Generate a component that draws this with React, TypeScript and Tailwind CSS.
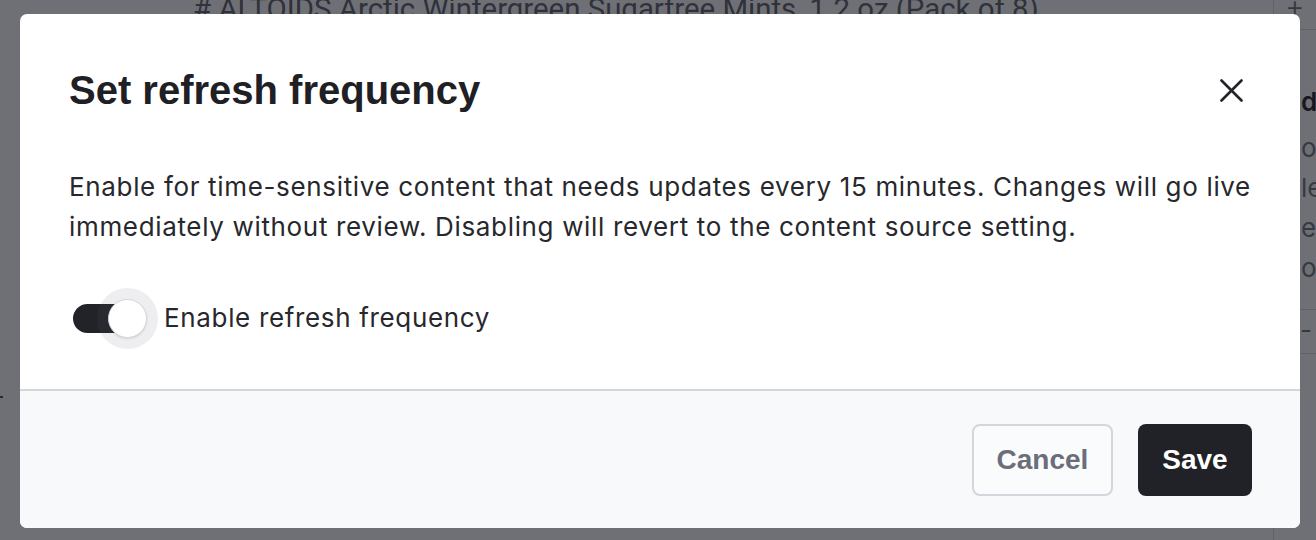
import { useState } from "react";

const sans = "font-['Liberation_Sans',Arial,sans-serif]";
const inter = "font-['Inter','Noto_Sans',sans-serif]";

function Toggle({ on, onChange }: { on: boolean; onChange: () => void }) {
  return (
    <button
      type="button"
      role="switch"
      aria-checked={on}
      onClick={onChange}
      className="relative ml-[4px] h-[29px] w-[70px] shrink-0 rounded-full bg-[#222328]"
    >
      {/* focus halo + thumb */}
      <span className="absolute left-[24px] top-[-16px] h-[61px] w-[61px] rounded-full bg-[rgba(99,102,125,0.11)]" />
      <span className="absolute left-[35px] top-[-5px] h-[39px] w-[39px] rounded-full border border-[#d6d7de] bg-white shadow-[0_1px_2px_rgba(0,0,0,0.12)]" />
    </button>
  );
}

function Backdrop() {
  return (
    <div className="flex h-[540px] w-full bg-white">
      {/* main column */}
      <div className="flex flex-1 flex-col">
        <p className="-mt-[8px] whitespace-nowrap pl-[193px] font-['Roboto','Liberation_Sans',sans-serif] text-[29.4px] leading-[34px] text-[#5b5f6a]">
          # ALTOIDS Arctic Wintergreen Sugarfree Mints, 1.2 oz (Pack of 8)
        </p>
        <div className="mt-[370px] h-[2px] w-[3px] bg-[#3b4a86]" />
      </div>

      {/* right panel */}
      <div className={`${inter} flex w-[43px] shrink-0 flex-col border-l border-[#d9dbe0]`}>
        <div className="flex h-[30px] items-start border-b border-[#d9dbe0] pl-[11px]">
          <span className="-mt-[9px] text-[30px] font-light leading-[30px] text-[#6b6f7a]">+</span>
        </div>
        <div className="whitespace-nowrap pl-[27px] pt-[56px]">
          <p className="text-[26px] font-semibold leading-[32px] text-[#1f2025]">do</p>
          <div className="mt-[10px] text-[26px] leading-[40px] text-[#70737c]">
            <p>o</p>
            <p>le</p>
            <p>e</p>
            <p>op</p>
          </div>
        </div>
        <div className="mt-[21px] h-[45px] border-y border-[#d9dbe0] pl-[26px] text-[26px] leading-[40px] text-[#70737c]">
          -
        </div>
      </div>
    </div>
  );
}

export default function App() {
  const [enabled, setEnabled] = useState(true);

  return (
    <div className="relative h-[540px] w-[1316px] overflow-hidden">
      <Backdrop />

      {/* Modal overlay */}
      <div className="absolute inset-0 flex items-start bg-[rgba(20,21,30,0.61)] pl-[20px] pt-[14px]">
        <div className="w-[1280px] overflow-hidden rounded-[7px] bg-white">
          {/* Body */}
          <div className="px-[49px] pb-[51px] pt-[52px]">
            <div className="flex items-start justify-between">
              <h2 className={`${sans} text-[40px] font-bold leading-[48px] text-[#1f2025]`}>
                Set refresh frequency
              </h2>
              <button
                type="button"
                aria-label="Close"
                className="mt-[4px] flex h-10 w-10 items-center justify-center"
              >
                <svg width="23" height="23" viewBox="0 0 23 23" fill="none">
                  <path
                    d="M1.5 1.5L21.5 21.5M21.5 1.5L1.5 21.5"
                    stroke="#23242a"
                    strokeWidth="2.6"
                    strokeLinecap="round"
                  />
                </svg>
              </button>
            </div>

            <p className={`${inter} mt-[53px] text-[26px] leading-[40px] tracking-[0.66px] text-[#27282d]`}>
              Enable for time-sensitive content that needs updates every 15 minutes. Changes will go live
              immediately without review. Disabling will revert to the content source setting.
            </p>

            <div className="mt-[51px] flex h-[40px] items-center gap-[21px]">
              <Toggle on={enabled} onChange={() => setEnabled(!enabled)} />
              <span className={`${inter} text-[26px] leading-[40px] tracking-[0.66px] text-[#27282d]`}>
                Enable refresh frequency
              </span>
            </div>
          </div>

          {/* Footer */}
          <div className="flex justify-end gap-[25px] border-t-2 border-[#d4d6dc] bg-[#f8f9fb] px-[48px] pb-[32px] pt-[33px]">
            <button
              type="button"
              className={`${sans} h-[72px] w-[141px] rounded-[8px] border-2 border-[#d3d6dc] bg-[#fafbfc] text-[28px] font-bold text-[#6b6e7a]`}
            >
              Cancel
            </button>
            <button
              type="button"
              className={`${sans} h-[72px] w-[114px] rounded-[8px] bg-[#212227] text-[28px] font-bold text-white`}
            >
              Save
            </button>
          </div>
        </div>
      </div>
    </div>
  );
}
